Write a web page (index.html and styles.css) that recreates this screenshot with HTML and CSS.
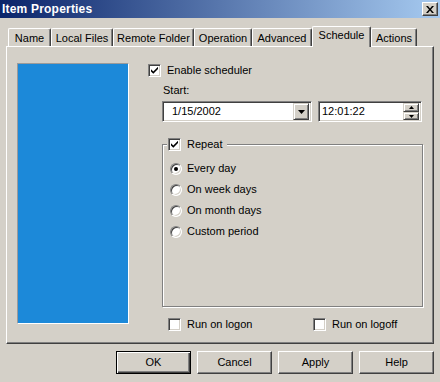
FILE: index.html
```html
<!DOCTYPE html>
<html>
<head>
<meta charset="utf-8">
<link rel="stylesheet" href="styles.css">
</head>
<body>
<div class="window">
  <div class="titlebar">
    <span class="title">Item Properties</span>
    <span class="close-btn">
      <svg width="8" height="7" viewBox="0 0 8 7"><path d="M0 0h2l2 2.5L6 0h2L5 3.5 8 7H6L4 4.5 2 7H0l3-3.5z" fill="#000"/></svg>
    </span>
  </div>
  <div class="content">
    <div class="tabs">
      <div class="tab tab-name">Name</div>
      <div class="tab tab-local">Local Files</div>
      <div class="tab tab-remote">Remote Folder</div>
      <div class="tab tab-operation">Operation</div>
      <div class="tab tab-advanced">Advanced</div>
      <div class="tab tab-schedule tab-active">Schedule</div>
      <div class="tab tab-actions">Actions</div>
    </div>
    <div class="panel">
      <div class="preview"></div>
      <div class="settings">
        <div class="check-row enable-row">
          <span class="checkbox"><svg width="7" height="7" viewBox="0 0 7 7"><path d="M0 2.2L2.3 4.5 7 -0.2V2L2.3 6.7 0 4.4z" fill="#000"/></svg></span>
          <span>Enable scheduler</span>
        </div>
        <div class="start-label">Start:</div>
        <div class="fields">
          <div class="field date-field">
            <span class="field-value date-value">1/15/2002</span>
            <span class="drop-btn"><svg width="7" height="4" viewBox="0 0 7 4"><path d="M0 0h7L3.5 4z" fill="#000"/></svg></span>
          </div>
          <div class="field time-field">
            <span class="field-value time-value">12:01:22</span>
            <span class="spin">
              <span class="spin-btn spin-up"><svg width="5" height="3" viewBox="0 0 5 3"><path d="M0 3h5L2.5 0z" fill="#000"/></svg></span>
              <span class="spin-btn spin-down"><svg width="5" height="3" viewBox="0 0 5 3"><path d="M0 0h5L2.5 3z" fill="#000"/></svg></span>
            </span>
          </div>
        </div>
        <div class="group">
          <div class="legend">
            <span class="checkbox"><svg width="7" height="7" viewBox="0 0 7 7"><path d="M0 2.2L2.3 4.5 7 -0.2V2L2.3 6.7 0 4.4z" fill="#000"/></svg></span>
            <span>Repeat</span>
          </div>
          <div class="radios">
            <div class="radio-row"><span class="radio radio-on"><span class="dot"></span></span><span>Every day</span></div>
            <div class="radio-row"><span class="radio"></span><span>On week days</span></div>
            <div class="radio-row"><span class="radio"></span><span>On month days</span></div>
            <div class="radio-row"><span class="radio"></span><span>Custom period</span></div>
          </div>
        </div>
        <div class="run-row">
          <div class="check-row"><span class="checkbox"></span><span>Run on logon</span></div>
          <div class="check-row"><span class="checkbox"></span><span>Run on logoff</span></div>
        </div>
      </div>
    </div>
    <div class="buttons">
      <div class="btn btn-default">OK</div>
      <div class="btn">Cancel</div>
      <div class="btn">Apply</div>
      <div class="btn">Help</div>
    </div>
  </div>
</div>
</body>
</html>
```
FILE: styles.css
```css
* { box-sizing: border-box; }
html, body { margin: 0; padding: 0; }
body {
  width: 440px;
  height: 382px;
  background: #d4d0c8;
  font-family: "Liberation Sans", Arial, sans-serif;
  font-size: 11px;
  color: #000;
  overflow: hidden;
}
.window { display: flex; flex-direction: column; width: 440px; height: 382px; }

.titlebar {
  height: 18px;
  background: linear-gradient(to right, #0a246a, #a6caf0);
  display: flex;
  align-items: center;
  justify-content: space-between;
  padding: 0 2px 0 2px;
}
.title { color: #fff; font-weight: bold; font-size: 12px; line-height: 14px; letter-spacing: 0.2px; }
.close-btn {
  width: 16px; height: 14px;
  background: #d4d0c8;
  border: 1px solid; border-color: #fff #404040 #404040 #fff;
  box-shadow: inset -1px -1px 0 #808080;
  display: flex; align-items: center; justify-content: center;
  padding-right: 1px;
}
.close-btn svg { display: block; }

.content { display: flex; flex-direction: column; padding: 8px 6px 0 6px; }

.tabs { display: flex; align-items: flex-end; height: 20px; padding-left: 2px; }
.tab {
  height: 18px;
  border-left: 1px solid #fff;
  border-top: 1px solid #fff;
  border-right: 1px solid #404040;
  border-radius: 2px 2px 0 0;
  box-shadow: inset -1px 0 0 #808080;
  display: flex; align-items: center; justify-content: center;
  line-height: 13px;
  padding-top: 1px;
  white-space: nowrap;
  background: #d4d0c8;
}
.tab-name { width: 43px; }
.tab-local { width: 62px; }
.tab-remote { width: 81px; }
.tab-operation { width: 58px; }
.tab-advanced { width: 60px; }
.tab-schedule { width: 59px; }
.tab-actions { width: 46px; }
.tab-active {
  height: 21px;
  margin-bottom: -1px;
  position: relative;
  z-index: 1;
  padding-top: 0;
  padding-bottom: 3px;
}

.panel {
  height: 298px;
  border: 1px solid; border-color: #fff #404040 #404040 #fff;
  box-shadow: inset -1px -1px 0 #808080;
  display: flex;
  padding: 16px 0 0 10px;
}
.preview {
  width: 112px; height: 261px;
  background: #1c89d9;
  border: 1px solid; border-color: #9a9a9a #fff #fff #9a9a9a;
  flex: none;
}
.settings { display: flex; flex-direction: column; margin-left: 19px; }

.check-row { display: flex; align-items: center; height: 13px; gap: 6px; line-height: 13px; white-space: nowrap; }
.enable-row { margin-top: 1px; }
.checkbox {
  width: 13px; height: 13px; flex: none;
  background: #fff;
  border: 1px solid; border-color: #808080 #fff #fff #808080;
  box-shadow: inset 1px 1px 0 #404040, inset -1px -1px 0 #d4d0c8;
  display: flex; align-items: center; justify-content: center;
}
.checkbox svg { display: block; }

.start-label { margin: 7px 0 0 15px; height: 13px; line-height: 13px; }

.fields { display: flex; gap: 6px; margin: 4px 0 0 14px; height: 21px; }
.field {
  height: 21px;
  background: #fff;
  border: 1px solid; border-color: #808080 #fff #fff #808080;
  box-shadow: inset 1px 1px 0 #404040, inset -1px -1px 0 #d4d0c8;
  display: flex; align-items: center;
  padding: 2px;
}
.date-field { width: 150px; }
.time-field { width: 104px; }
.field-value { flex: 1; line-height: 13px; }
.date-value { padding-left: 7px; }
.time-value { padding-left: 1px; }
.drop-btn {
  width: 16px; height: 17px;
  background: #d4d0c8;
  border: 1px solid; border-color: #d4d0c8 #404040 #404040 #d4d0c8;
  box-shadow: inset 1px 1px 0 #fff, inset -1px -1px 0 #808080;
  display: flex; align-items: center; justify-content: center;
}
.drop-btn svg, .spin-btn svg { display: block; }
.spin { display: flex; flex-direction: column; width: 16px; height: 17px; }
.spin-btn {
  flex: 1;
  background: #d4d0c8;
  border: 1px solid; border-color: #d4d0c8 #404040 #404040 #d4d0c8;
  box-shadow: inset 1px 1px 0 #fff, inset -1px -1px 0 #808080;
  display: flex; align-items: center; justify-content: center;
}
.spin-up { height: 9px; flex: none; }
.spin-down { height: 8px; flex: none; }

.group {
  position: relative;
  width: 261px; height: 163px;
  margin: 22px 0 0 14px;
  border: 1px solid #808080;
  box-shadow: 1px 1px 0 #fff, inset 1px 1px 0 #fff;
}
.legend {
  position: absolute;
  top: -7px; left: 4px;
  display: flex; align-items: center; gap: 6px;
  height: 13px; line-height: 13px;
  padding: 0 5px 0 1px;
  background: #d4d0c8;
}
.radios { display: flex; flex-direction: column; gap: 8px; padding: 17px 0 0 7px; }
.radio-row { display: flex; align-items: center; gap: 5px; height: 13px; line-height: 13px; }
.radio {
  width: 12px; height: 12px; flex: none;
  border-radius: 50%;
  background: #fff;
  border: 1px solid; border-color: #808080 #fff #fff #808080;
  box-shadow: inset 1px 1px 0 #404040, inset -1px -1px 0 #d4d0c8;
  display: flex; align-items: center; justify-content: center;
}
.dot { width: 4px; height: 4px; border-radius: 50%; background: #000; }

.run-row { display: grid; grid-template-columns: 145px auto; margin: 11px 0 0 20px; }

.buttons { display: flex; justify-content: flex-end; gap: 6px; margin-top: 7px; }
.btn {
  width: 75px; height: 23px;
  border: 1px solid; border-color: #fff #404040 #404040 #fff;
  box-shadow: inset -1px -1px 0 #808080;
  display: flex; align-items: center; justify-content: center;
  line-height: 13px;
}
.btn-default {
  border-color: #000;
  box-shadow: inset 1px 1px 0 #fff, inset -1px -1px 0 #404040, inset -2px -2px 0 #808080;
}
```
